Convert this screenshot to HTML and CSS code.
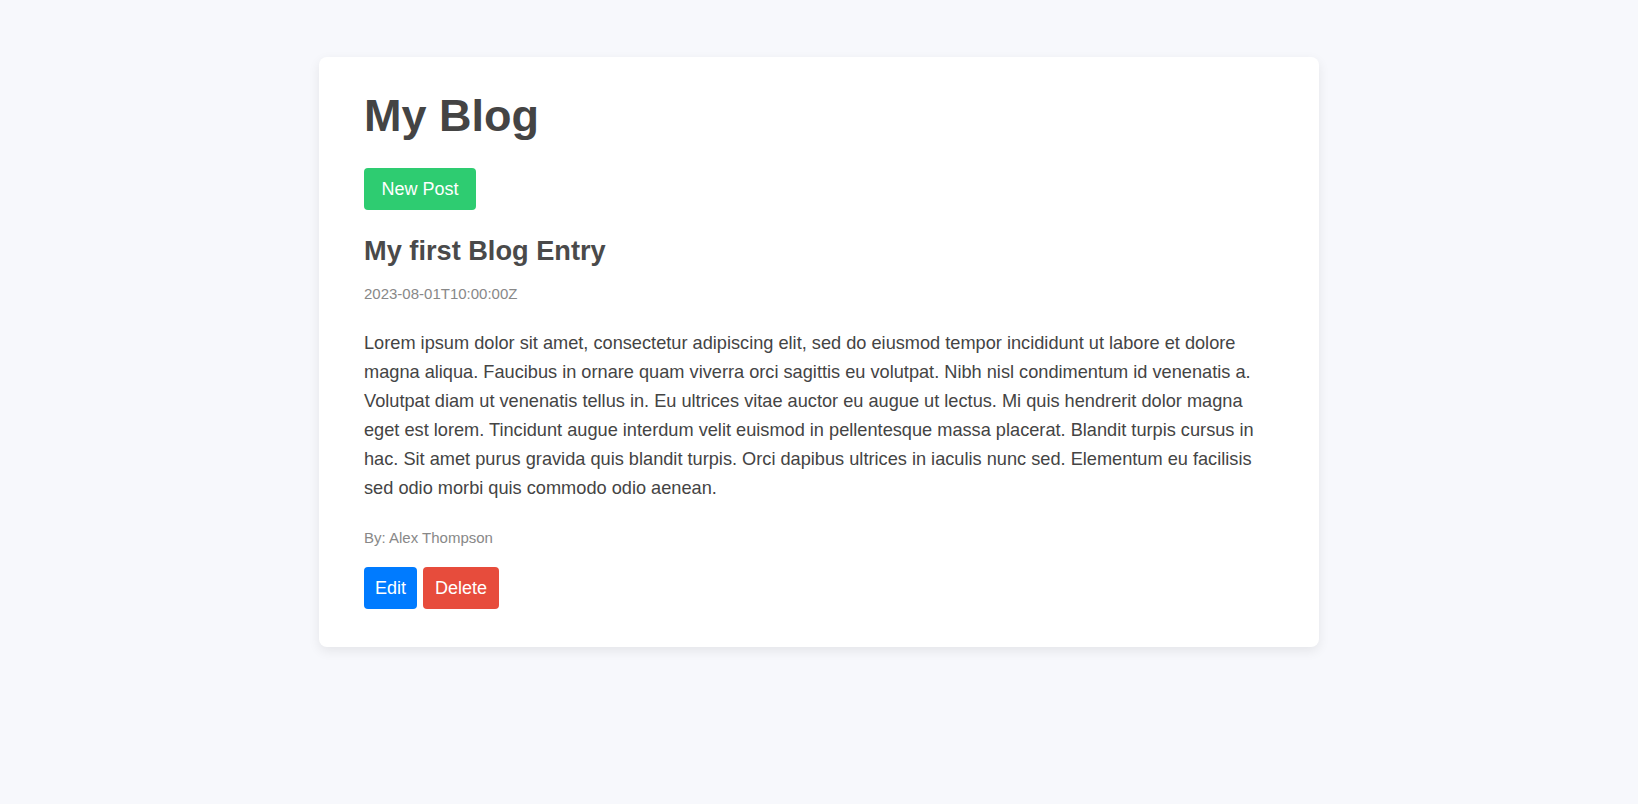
FILE: index.html
```html
<!DOCTYPE html>
<html lang="en">
<head>
<meta charset="utf-8">
<title>My Blog</title>
<link rel="stylesheet" href="styles.css">
</head>
<body>
<main class="card">
  <h1 class="title">My Blog</h1>
  <button class="btn btn-new">New Post</button>
  <article class="post">
    <h2 class="post-title">My first Blog Entry</h2>
    <p class="post-date">2023-08-01T10:00:00Z</p>
    <p class="post-body">Lorem ipsum dolor sit amet, consectetur adipiscing elit, sed do eiusmod tempor incididunt ut labore et dolore magna aliqua. Faucibus in ornare quam viverra orci sagittis eu volutpat. Nibh nisl condimentum id venenatis a. Volutpat diam ut venenatis tellus in. Eu ultrices vitae auctor eu augue ut lectus. Mi quis hendrerit dolor magna eget est lorem. Tincidunt augue interdum velit euismod in pellentesque massa placerat. Blandit turpis cursus in hac. Sit amet purus gravida quis blandit turpis. Orci dapibus ultrices in iaculis nunc sed. Elementum eu facilisis sed odio morbi quis commodo odio aenean.</p>
    <p class="post-author">By: Alex Thompson</p>
    <div class="actions">
      <button class="btn btn-edit">Edit</button>
      <button class="btn btn-delete">Delete</button>
    </div>
  </article>
</main>
</body>
</html>
```

FILE: styles.css
```css
html, body {
  margin: 0;
  padding: 0;
}
body {
  background: #f7f8fc;
  font-family: "Liberation Sans", Arial, sans-serif;
  color: #444;
  padding-top: 57px;
  padding-bottom: 40px;
}
.card {
  box-sizing: border-box;
  width: 1000px;
  margin: 0 auto;
  background: #fff;
  border-radius: 8px;
  box-shadow: 0 4px 12px rgba(0, 0, 0, 0.08);
  padding: 33px 45px 38px;
  display: flex;
  flex-direction: column;
  align-items: flex-start;
}
.title {
  margin: 0;
  font-size: 45px;
  line-height: 52px;
  font-weight: bold;
  color: #444;
}
.btn {
  border: none;
  border-radius: 4px;
  color: #fff;
  font-family: "Liberation Sans", Arial, sans-serif;
  font-size: 18px;
  line-height: 20px;
  padding: 11px 11px;
  cursor: pointer;
}
.btn-new {
  margin-top: 26px;
  padding: 11px 17.5px;
  background: #2ecc71;
}
.post {
  align-self: stretch;
}
.post-title {
  margin: 25px 0 0;
  font-size: 27.2px;
  line-height: 32px;
  font-weight: bold;
  color: #4a4a4a;
}
.post-date {
  margin: 18px 0 0;
  font-size: 15px;
  line-height: 17px;
  color: #888;
}
.post-body {
  margin: 27px 0 0;
  font-size: 18.2px;
  line-height: 29px;
  color: #444;
}
.post-author {
  margin: 26px 0 0;
  font-size: 15px;
  line-height: 17px;
  color: #888;
}
.actions {
  display: flex;
  gap: 6px;
  margin-top: 21px;
}
.btn-edit {
  background: #007bff;
}
.btn-delete {
  padding: 11px 12px;
  background: #e74c3c;
}
```
